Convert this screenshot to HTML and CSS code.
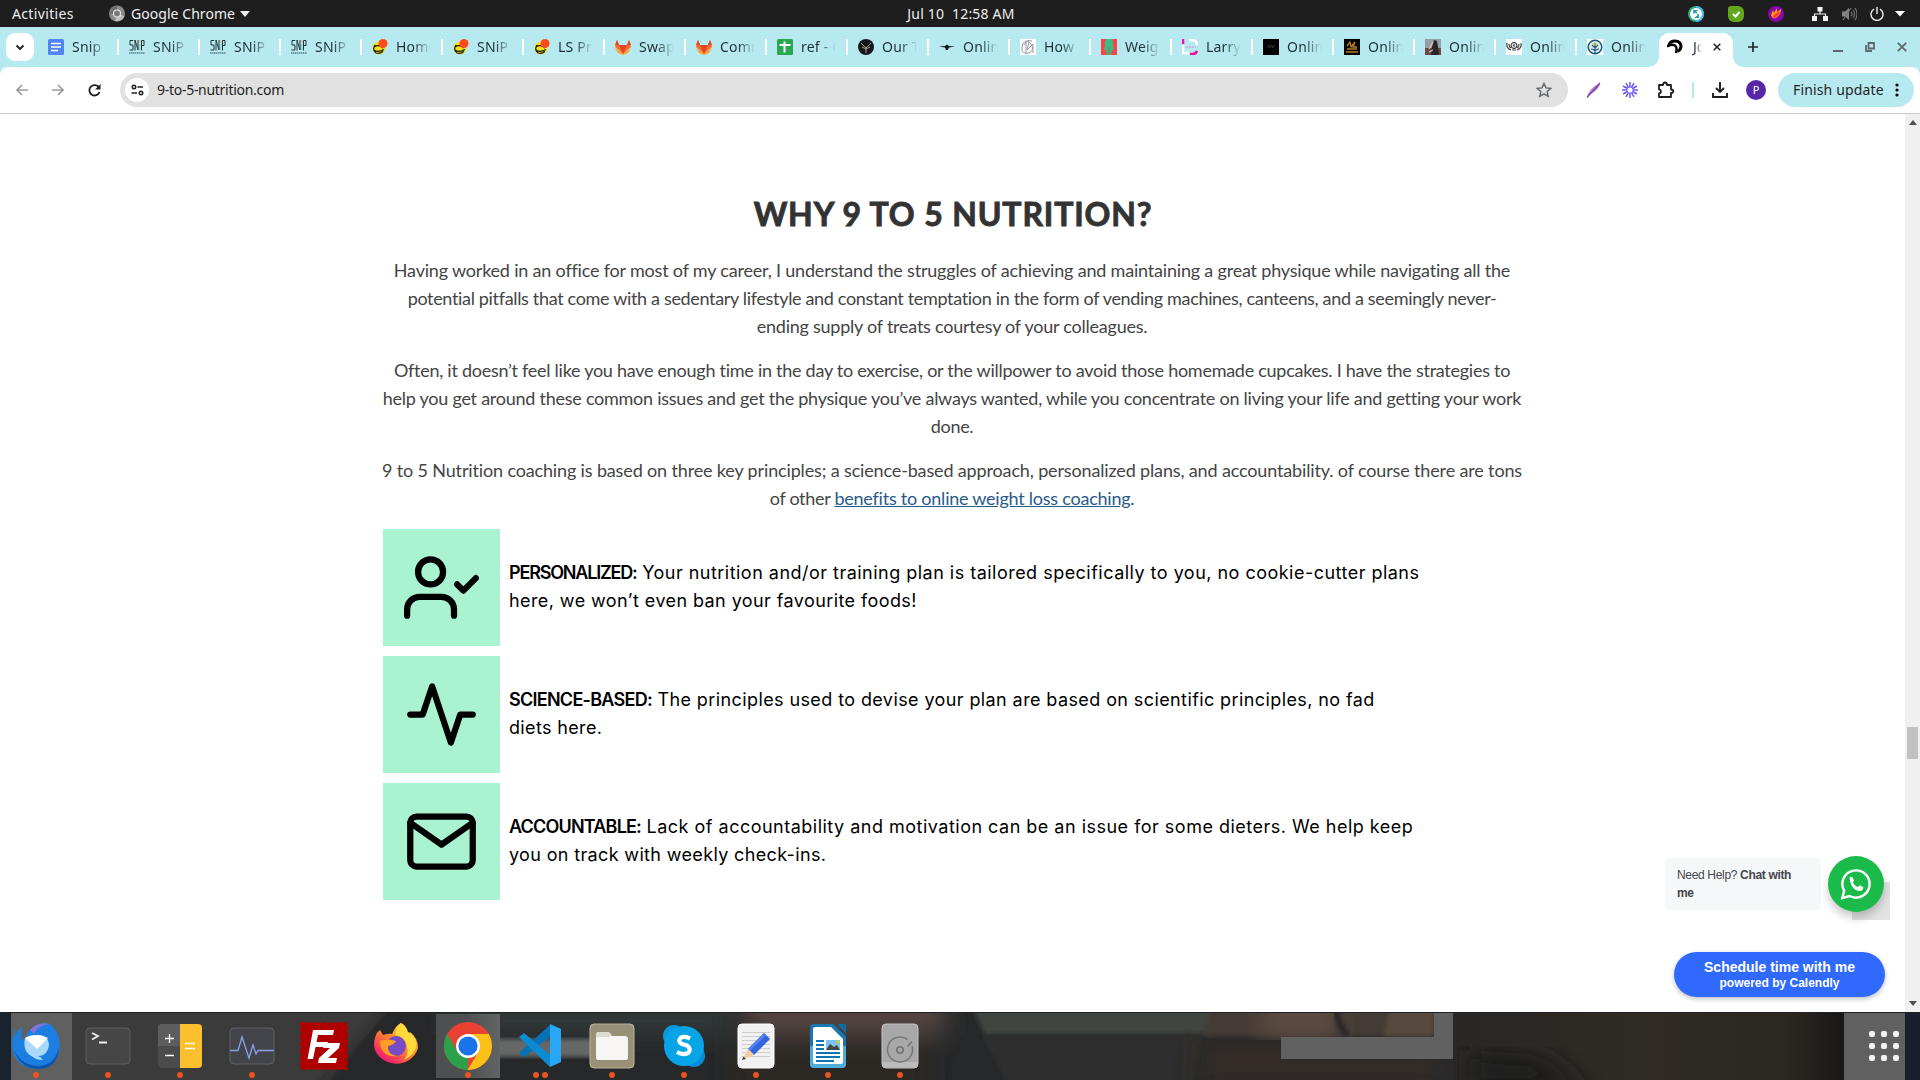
FILE: index.html
```html
<!DOCTYPE html>
<html lang="en">
<head>
<meta charset="utf-8">
<title>9 to 5 Nutrition</title>
<link rel="stylesheet" href="styles.css">
</head>
<body>
<svg width="0" height="0" class="defs">
  <symbol id="doc" viewBox="0 0 16 16"><rect width="16" height="16" rx="1.5" fill="#4f86f3"/><path d="M3 4.5h10M3 8h10M3 11.5h7" stroke="#fff" stroke-width="1.6"/></symbol>
  <symbol id="snp" viewBox="0 0 16 16"><path d="M4.200 1.500H1v4.500h3v5H.5M6 11.500V1l3 10V1M12.500 11.500V1.500h2.500v5h-2.500" fill="none" stroke="#1e3438" stroke-width="1"/><path d="M10.800 1v3" stroke="#f5b083" stroke-width="1"/><path d="M10.800 5v6" stroke="#6fd8b4" stroke-width="1"/><path d="M0 14h16" stroke="#5d8087" stroke-width="1.600" stroke-dasharray="1.500 .5"/></symbol>
  <symbol id="hat" viewBox="0 0 16 16"><circle cx="7" cy="9" r="6.500" fill="#f4e11b"/><path d="M2 8q5-3 9 1M2 11q4 3 10-.5M4 14q4 1 7-1.500M3 6Q0 11 4 14" fill="none" stroke="#1c1c12" stroke-width="1.200"/><circle cx="11" cy="4.500" r="4.500" fill="#ff4a1a"/></symbol>
  <symbol id="fox" viewBox="0 0 16 16"><path d="M2 1l2 5h8l2-5 2 7-8 7-8-7z" fill="#fc6d26"/><path d="M4 6h8l-4 9zM2 1l2 5H0z M14 1l2 5h-4z" fill="#e24329"/><path d="M0 9l8 6 8-6-3 5-5 2-5-2z" fill="#fca326"/></symbol>
  <symbol id="sheet" viewBox="0 0 16 16"><rect width="16" height="16" rx="1.500" fill="#28a851"/><path d="M2.500 6h11M7.500 2.500v11" stroke="#fff" stroke-width="2"/></symbol>
  <symbol id="our" viewBox="0 0 16 16"><circle cx="8" cy="8" r="8" fill="#15181a"/><path d="M3 4l5 5 5-5M4 8l4 2 4-2M8 9v5" fill="none" stroke="#a59b80" stroke-width="1"/></symbol>
  <symbol id="bird" viewBox="0 0 16 16"><path d="M0 7.500l6-.6 2-1.500 2 1.500 6 .6-6 1-1.200 2.500H7L6 8.500z" fill="#101a1c"/></symbol>
  <symbol id="sketch" viewBox="0 0 16 16"><rect width="16" height="16" fill="#fff"/><path d="M12 2Q3 0 2 8t7 6q6-3 2-9T4 6M6 14V3M9 3l-2 8 6-6v9" fill="none" stroke="#9b9b9b"/></symbol>
  <symbol id="body" viewBox="0 0 16 16"><rect width="16" height="16" fill="#fb4248"/><path d="M5 0h6q2 3 1 7l1 4h-2l-1 5H6l-1-5H3l1-4Q3 3 5 0z" fill="#35bf83"/><path d="M8 8v8" stroke="#a4694e"/></symbol>
  <symbol id="larry" viewBox="0 0 16 16"><path d="M1 6v8h6M7 1h4q4 1 4 5" fill="none" stroke="#fff" stroke-width="2.500"/><path d="M1 0v5M8 15h3q3 0 4-3" fill="none" stroke="#f10ca7" stroke-width="2.500"/><path d="M4 8h10" stroke="#cfa3dd" stroke-width="1.600" stroke-dasharray="2 1"/></symbol>
  <symbol id="black" viewBox="0 0 16 16"><rect width="16" height="16"/><path d="M4 9l2-3 1 3 2-3 1 3 2-3" fill="none" stroke="#333"/></symbol>
  <symbol id="gold" viewBox="0 0 16 16"><rect width="16" height="16"/><path d="M3 7l3-4 1 5 4-5-2 5h4M3 10h10M2 13h12" fill="none" stroke="#b17c22" stroke-width="1.300"/></symbol>
  <symbol id="photo" viewBox="0 0 16 16"><rect width="16" height="16" fill="#969fa5"/><rect y="9" width="16" height="7" fill="#664c45"/><path d="M9 1l3 1 1 6 1 8H6l1-8z" fill="#29262a"/><path d="M8 3l-4 7M4 13l4-2" stroke="#e6c2b0" stroke-width="1.200"/></symbol>
  <symbol id="crest" viewBox="0 0 16 16"><rect width="16" height="16" fill="#fff"/><path d="M1 4q-1 5 4 7M15 4q1 5-4 7M3 5q0 3 2 4M13 5q0 3-2 4" fill="none" stroke="#444" stroke-width="1.200"/><circle cx="8" cy="6.500" r="3" fill="#ddd" stroke="#222"/><circle cx="8" cy="6.500" r="1" fill="#444"/><path d="M6 11h4" stroke="#444"/></symbol>
  <symbol id="tree" viewBox="0 0 16 16"><rect width="16" height="16" fill="#fff"/><circle cx="8" cy="8" r="6.800" fill="#dcebe8" stroke="#1c5978" stroke-width="1.500"/><path d="M8 15V6M4 10q3 0 4 2 1-2 4-2M5 6l3 3 3-3" fill="none" stroke="#1c5978" stroke-width="1.100"/><circle cx="8" cy="5" r="1.600" fill="#94b945"/></symbol>
</svg>

<header class="topbar">
  <div class="top-left"><span class="activities">Activities</span>
    <svg width="16" height="17" viewBox="0 0 16 17"><circle cx="8" cy="8.500" r="8" fill="#8a8a8a"/><path d="M8 8.500L15.500 11A8 8 0 0 1 6 16z" fill="#bdbdbd"/><path d="M8 8.500H1A8 8 0 0 1 8 .5z" fill="#6d6d6d"/><circle cx="8" cy="8.500" r="3.500" fill="#777" stroke="#e6e6e6" stroke-width="1.200"/></svg>
    <span class="app">Google Chrome</span><svg width="10" height="6"><path d="M0 0h10L5 6z" fill="#eee"/></svg></div>
  <div class="clock">Jul 10&nbsp; 12:58 AM</div>
  <div class="tray">
    <svg width="16" height="16"><circle cx="8" cy="8" r="8" fill="#2fa97c"/><path d="M8 0a8 8 0 0 1 0 16z" fill="#4ab5ec"/><circle cx="8" cy="8" r="6" fill="#fff"/><path d="M5 4h5L6 8zM6 12l5-4v4z" fill="#239dae"/><path d="M5 7l3-1 3 4" fill="none" stroke="#239dae"/></svg>
    <svg width="16" height="16"><rect width="16" height="16" rx="6" fill="#62a61b"/><rect width="9" height="9" rx="3" fill="#62a61b"/><path d="M5 8l2.500 2.500L11.500 6" fill="none" stroke="#fff" stroke-width="2"/></svg>
    <svg width="16" height="16"><circle cx="8" cy="8" r="8" fill="#8408a5"/><path d="M3 9l2-5 1 3 3-5v4l4-3q0 6-5 9-4 1-5-3z" fill="#ff9c12"/><path d="M4 11l3-3 5-3q-1 5-5 7z" fill="#ff3c2d"/></svg>
    <svg class="net" width="16" height="14"><path d="M5.500 0h5v4.500h-5zM0 9h5v5H0zM11 9h5v5h-5z" fill="#f2f2f2"/><path d="M8 4v3M2.500 10V7h11v3" fill="none" stroke="#f2f2f2" stroke-width="1.200"/></svg>
    <svg class="vol" width="15" height="14"><path d="M0 4.500h3L7 1v12L3 9.500H0z" fill="#858585"/><path d="M9 5q2 2 0 4M11 3q3 4 0 8M13 1q4 6 0 12M1 13L9 1" fill="none" stroke="#767676" stroke-width="1.100"/></svg>
    <svg class="pow" width="14" height="14"><path d="M4 2.200a6 6 0 1 0 6 0M7 0v7" fill="none" stroke="#eee" stroke-width="1.400"/></svg>
    <svg class="car" width="10" height="6"><path d="M0 0h10L5 5.500z" fill="#fff"/></svg>
  </div>
</header>

<nav class="tabs">
  <div class="search-tabs"><svg width="10" height="7"><path d="M1.500 1.500L5 5l3.500-3.500" fill="none" stroke="#1f2325" stroke-width="1.900"/></svg></div>
  <div class="tab"><svg><use href="#doc"/></svg><span>Snip l</span></div>
  <div class="tab"><svg><use href="#snp"/></svg><span>SNiP</span></div>
  <div class="tab"><svg><use href="#snp"/></svg><span>SNiP</span></div>
  <div class="tab"><svg><use href="#snp"/></svg><span>SNiP</span></div>
  <div class="tab"><svg><use href="#hat"/></svg><span>Home</span></div>
  <div class="tab"><svg><use href="#hat"/></svg><span>SNiP</span></div>
  <div class="tab"><svg><use href="#hat"/></svg><span>LS Pr</span></div>
  <div class="tab"><svg><use href="#fox"/></svg><span>Swap</span></div>
  <div class="tab"><svg><use href="#fox"/></svg><span>Comm</span></div>
  <div class="tab"><svg><use href="#sheet"/></svg><span>ref - G</span></div>
  <div class="tab"><svg><use href="#our"/></svg><span>Our T</span></div>
  <div class="tab"><svg><use href="#bird"/></svg><span>Onlin</span></div>
  <div class="tab"><svg><use href="#sketch"/></svg><span>How</span></div>
  <div class="tab"><svg><use href="#body"/></svg><span>Weig</span></div>
  <div class="tab"><svg><use href="#larry"/></svg><span>Larry</span></div>
  <div class="tab"><svg><use href="#black"/></svg><span>Onlin</span></div>
  <div class="tab"><svg><use href="#gold"/></svg><span>Onlin</span></div>
  <div class="tab"><svg><use href="#photo"/></svg><span>Onlin</span></div>
  <div class="tab"><svg><use href="#crest"/></svg><span>Onlin</span></div>
  <div class="tab last"><svg><use href="#tree"/></svg><span>Onlin</span></div>
  <div class="tab-active">
    <svg width="16" height="16" viewBox="0 0 16 16"><path d="M2 6Q3 2 8 2q6 0 6 6-.5 3-3.500 4.500" fill="none" stroke="#000" stroke-width="3"/><path d="M0 7.500q4-3 8-1Q10.500 8 9 14" fill="none" stroke="#000" stroke-width="2.400"/></svg>
    <span>Jo</span>
    <svg width="8" height="8"><path d="M.7.7l6.600 6.600M7.300.7L.7 7.300" stroke="#222" stroke-width="1.500"/></svg>
  </div>
  <svg class="plus" width="10" height="10"><path d="M5 0v10M0 5h10" stroke="#1f2a2d" stroke-width="1.700"/></svg>
  <div class="win">
    <svg width="10" height="10"><path d="M0 9h10" stroke="#5b6a6e" stroke-width="2"/></svg>
    <svg width="10" height="10"><path d="M3.500 1H9v5.500H3.500zM1 3v6h6" fill="none" stroke="#5b6a6e" stroke-width="1.800"/></svg>
    <svg width="10" height="10"><path d="M.8.8l8.400 8.400M9.200.8L.8 9.200" stroke="#5b6a6e" stroke-width="1.800"/></svg>
  </div>
</nav>

<div class="toolbar">
  <div class="nav">
    <svg width="12" height="12"><path d="M12 6H1.500M6 1L1 6l5 5" fill="none" stroke="#9a9a9a" stroke-width="1.600"/></svg>
    <svg width="12" height="12"><path d="M0 6h10.500M6 1l5 5-5 5" fill="none" stroke="#9a9a9a" stroke-width="1.600"/></svg>
    <svg width="13" height="13"><path d="M11 3.500A5.200 5.200 0 1 0 11.500 8" fill="none" stroke="#1f1f1f" stroke-width="1.800"/><path d="M12.500 0v5.500H7z" fill="#1f1f1f"/></svg>
  </div>
  <div class="omnibox">
    <div class="site"><svg width="13" height="12"><g fill="none" stroke="#222" stroke-width="1.600"><circle cx="3" cy="3" r="1.700"/><path d="M6.500 3H12M.5 9H6"/><circle cx="10" cy="9" r="1.700"/></g></svg></div>
    <span>9-to-5-nutrition.com</span>
    <svg class="star" width="16" height="16" viewBox="0 0 16 16"><path d="M8 1.500l2 4.400 4.800.5-3.600 3.200 1 4.700L8 11.900l-4.200 2.400 1-4.700L1.200 6.400 6 5.900z" fill="none" stroke="#606367" stroke-width="1.400"/></svg>
  </div>
  <div class="tools">
    <svg width="16" height="16"><path d="M1 15Q3 6 14 1q0 7-10 11z" fill="#b98ad8"/><path d="M1 15.500L14 1" stroke="#7f3a94" stroke-width="1.200"/></svg>
    <svg width="16" height="16" viewBox="-8 -8 16 16"><g stroke="#6a55f4" stroke-width="1.500"><path d="M0-8v16M-6.900-4L6.900 4M-6.900 4L6.900-4M-4-6.900L4 6.900M4-6.900L-4 6.900M-8 0H8"/></g><circle r="2.600" fill="#fff"/></svg>
    <svg width="18" height="18"><path d="M2 4h4q0-2.500 2-2.500T10 4h4v4.500q2.300 0 2.300 1.800T14 12v4H2v-3.500q2-.3 2-2T2 8.300z" fill="none" stroke="#1f1f1f" stroke-width="1.800" stroke-linejoin="round"/></svg>
    <i></i>
    <svg width="16" height="16"><path d="M8 0v9.500M4 6l4 4 4-4M1 11v4h14v-4" fill="none" stroke="#1f1f1f" stroke-width="1.900"/></svg>
    <b class="avatar">P</b>
  </div>
  <div class="update"><span>Finish update</span><svg width="4" height="14"><circle cx="2" cy="2" r="1.600"/><circle cx="2" cy="7" r="1.600"/><circle cx="2" cy="12" r="1.600"/></svg></div>
</div>

<div class="view">
  <main>
    <h1>WHY 9 TO 5 NUTRITION?</h1>
    <p><span class="a1">Having worked in an office for most of my career, I understand the struggles of achieving and maintaining a great physique while navigating all the</span>
    <span class="a2">potential pitfalls that come with a sedentary lifestyle and constant temptation in the form of vending machines, canteens, and a seemingly never-</span>
    <span class="a3">ending supply of treats courtesy of your colleagues.</span></p>
    <p><span class="b1">Often, it doesn’t feel like you have enough time in the day to exercise, or the willpower to avoid those homemade cupcakes. I have the strategies to</span>
    <span class="b2">help you get around these common issues and get the physique you’ve always wanted, while you concentrate on living your life and getting your work</span>
    <span class="b3">done.</span></p>
    <p><span class="c1">9 to 5 Nutrition coaching is based on three key principles; a science-based approach, personalized plans, and accountability. of course there are tons</span>
    <span class="c2">of other <a>benefits to online weight loss coaching</a>.</span></p>
    <section class="features">
      <div class="feature"><div class="tile"><svg viewBox="0 0 24 24"><path d="M16 21v-2a4 4 0 0 0-4-4H5a4 4 0 0 0-4 4v2"/><circle cx="8.500" cy="7" r="4"/><path d="M17 11l2 2 4-4"/></svg></div>
        <div class="desc"><span class="d1"><strong>PERSONALIZED:</strong> Your nutrition and/or training plan is tailored specifically to you, no cookie-cutter plans</span><span class="d2">here, we won’t even ban your favourite foods!</span></div></div>
      <div class="feature"><div class="tile"><svg viewBox="0 0 24 24"><path d="M22 12h-4l-3 9L9 3l-3 9H2"/></svg></div>
        <div class="desc"><span class="e1"><strong>SCIENCE-BASED:</strong> The principles used to devise your plan are based on scientific principles, no fad</span><span class="e2">diets here.</span></div></div>
      <div class="feature"><div class="tile"><svg viewBox="0 0 24 24"><path d="M4 4h16c1.100 0 2 .9 2 2v12c0 1.100-.9 2-2 2H4c-1.100 0-2-.9-2-2V6c0-1.100.9-2 2-2z"/><path d="M22 6l-10 7L2 6"/></svg></div>
        <div class="desc"><span class="f1"><strong>ACCOUNTABLE:</strong> Lack of accountability and motivation can be an issue for some dieters. We help keep</span><span class="f2">you on track with weekly check-ins.</span></div></div>
    </section>
  </main>
  <div class="scroll"><svg width="8" height="5"><path d="M0 5h8L4 0z" fill="#505050"/></svg><div class="thumb"></div><svg width="8" height="5"><path d="M0 0h8L4 5z" fill="#505050"/></svg></div>
  <div class="totop"></div>
  <div class="help">Need Help? <b>Chat with<br>me</b></div>
  <div class="whats"><svg width="32" height="32" viewBox="0 0 32 32"><path d="M2.300 30l1.900-7.200A13.600 13.600 0 1 1 9.600 28z" fill="none" stroke="#fff" stroke-width="2.400"/><path d="M9.500 10q1-2 2.800-1l1.700 3.500-1.200 2q1.500 3.300 5 4.800l1.700-2 3.700 1.800q.5 3-3 4Q11.500 23 9.500 10z" fill="#fff"/></svg></div>
  <div class="calendly"><span>Schedule time with me</span><small>powered by Calendly</small></div>
</div>

<footer class="dock">
  <svg class="wall" width="1920" height="68">
    <defs><filter id="bl"><feGaussianBlur stdDeviation="12"/></filter><filter id="b2"><feGaussianBlur stdDeviation="2"/></filter>
    <linearGradient id="br" x2="1"><stop offset="0" stop-color="#282725"/><stop offset=".5" stop-color="#302b25"/><stop offset=".85" stop-color="#2b2722"/><stop offset="1" stop-color="#191817"/></linearGradient></defs>
    <rect width="1920" height="68" fill="#262829"/>
    <path d="M0-5h390l-75 78H0z" fill="#3b3b3b" filter="url(#b2)"/>
    <path d="M384-5l-63 78" stroke="#343535" stroke-width="8" filter="url(#b2)"/>
    <g filter="url(#bl)"><path d="M450-20h280v42H450z" fill="#333738"/><path d="M745-20h200v44H745z" fill="#554540"/><path d="M730 34h200v50H730z" fill="#2b2624"/></g>
    <path d="M972-5h242v28H985z" fill="#41443f" filter="url(#b2)"/><path d="M982 23h220l-10 50H1008z" fill="#2e2f2d" filter="url(#b2)"/>
    <path d="M1200 24h240v54h-243z" fill="#302b28" filter="url(#bl)"/><path d="M1212-5h222v29h-230z" fill="#443b36" filter="url(#b2)"/>
    <path d="M1265-10h68l12 34h-88z" fill="#5f4e42" filter="url(#bl)"/><path d="M1336-5q2 21 12 29" stroke="#29282a" stroke-width="7" fill="none" filter="url(#b2)"/><path d="M1390-5h44v29h-50z" fill="#57493e" filter="url(#b2)"/>
    <rect x="1453" width="392" height="68" fill="url(#br)"/><path d="M1470 78V38l70 5 50 35z" fill="#1d1c1b" filter="url(#bl)"/>
    <path d="M1434 0h19v47h-172V25h153z" fill="#616161"/>
    <path d="M480 27h115v18H480z" fill="#666767" filter="url(#b2)"/>
    <rect width="11" height="68" fill="#19232d"/><rect x="11" width="61" height="68" fill="#606060"/>
    <rect x="1844" width="61" height="68" fill="#606060"/><rect x="1905" width="15" height="68" fill="#182030"/>
    <rect width="1920" height="1" fill="#202124"/>
  </svg>
  <div class="apps">
    <div class="item"><svg viewBox="0 0 48 48"><path d="M4 5Q0 14 0 24a23.500 22.500 0 0 0 48 0q0-14-10-22Q26-1 18 8q-4 2-3 5l-5 6Q9 9 10 5 5 8 2 17z" fill="#1b7ee0"/><path d="M2 28q8 16 25 16 15-1 20-18-1 21-22 21Q8 46 2 28z" fill="#0c56ae"/><path d="M18 8q8-9 20-6-12 1-16 10z" fill="#8276d7"/><path d="M13 16q-3 14 8 19 3 3 10 3-2-3-5-4 10 0 11-12-1-9-12-9-8 0-12 3z" fill="#a9d8fa"/><path d="M13 16l12 11 11-11q-11-6-23 0z" fill="#fff"/></svg><i></i></div>
    <div class="item"><svg viewBox="0 0 48 48"><rect x="2" y="6" width="44" height="36" rx="4" fill="#464646" stroke="#5f5f5f"/><path d="M8 11l6 3-6 3.500M15 20.500h8" fill="none" stroke="#eee" stroke-width="1.800"/></svg><i></i></div>
    <div class="item"><svg viewBox="0 0 48 48"><rect x="2" y="2" width="44" height="44" rx="4" fill="#4b4b4b"/><path d="M24 2H6q-4 0-4 4v18h22z" fill="#5d5d5d"/><path d="M24 2h18q4 0 4 4v36q0 4-4 4H24z" fill="#fcbf2d"/><path d="M9 16.500h9M13.500 12v9M9 33.500h9M29 21.500h10M29 26.500h10" stroke="#fff" stroke-width="1.300"/></svg><i></i></div>
    <div class="item"><svg viewBox="0 0 48 48"><rect x="2" y="6" width="44" height="36" rx="4" fill="#434449" stroke="#606164"/><path d="M2 28.500h8L14 15l7 21 4-13 3 9 2-3.500h16" fill="none" stroke="#86a2e8" stroke-width="1.300"/></svg><i></i></div>
    <div class="item off"><svg viewBox="0 0 48 48"><rect x="1" y="1" width="46" height="46" fill="#ae0000" stroke="#ae0000" stroke-width="2" stroke-dasharray="4 3"/><path d="M7.500 37L13 8h21l-1 5H18l-1.500 7H28l-1 5H15.500l-2.500 12zM24 21h16l-1 5-11 10h9l-1 5H18l1-5 11-10h-7z" fill="#fff"/></svg></div>
    <div class="item off"><svg viewBox="0 0 48 48"><defs><linearGradient id="ff" x1="1" x2=".2" y2="1"><stop offset=".1" stop-color="#ffe84b"/><stop offset=".5" stop-color="#ff8a2a"/><stop offset=".9" stop-color="#f3246c"/></linearGradient></defs><path d="M2 24Q2 12 8 8l3 5q6-2 9-1 4-9 9-11l6 12 3-3q8 6 8 16a22.500 21 0 0 1-44-2z" fill="url(#ff)"/><path d="M29 1q-5 4-6 12 10 1 12 11 2 8-3 14 11-5 12-14 0-10-8-14-2-7-7-9z" fill="#ffda3b"/><circle cx="24" cy="24" r="10" fill="#774bc3"/><path d="M8 19q8-3 16 0-2 4-8 5-1 8 9 10Q9 36 8 19z" fill="#ff9d24"/></svg></div>
    <div class="item current"><svg viewBox="0 0 48 48"><circle cx="24" cy="24" r="24" fill="#e94235"/><path d="M3.200 12L13.600 30 24 36l-.5 12A24 24 0 0 1 3.200 12z" fill="#2ca14c"/><path d="M24 12h20.800A24 24 0 0 1 23.500 48L34.400 30z" fill="#fcc016"/><circle cx="24" cy="24" r="12" fill="#fff"/><circle cx="24" cy="24" r="9.600" fill="#1a73e8"/></svg><i></i></div>
    <div class="item"><svg viewBox="0 0 48 48"><path d="M34 3L3 31l5 4L34 15z" fill="#0872b9"/><path d="M3 15l5-4 26 22v12z" fill="#0c8bd5"/><path d="M34 2l11 5v33l-11 5z" fill="#29a6f5"/></svg><i></i><i></i></div>
    <div class="item"><svg viewBox="0 0 48 48"><rect x="2" y="2" width="44" height="44" rx="4" fill="#999078" stroke="#b9b29d"/><path d="M8 13q0-3 3-3h8l4 4h14q3 0 3 3v19q0 2-2 2H10q-2 0-2-2z" fill="#f7f6f4"/><path d="M8 15h13l3-2-3-3H11q-3 0-3 5z" fill="#dedbd2"/></svg><i></i></div>
    <div class="item"><svg viewBox="0 0 48 48"><circle cx="14" cy="14" r="11" fill="#0999df"/><circle cx="34" cy="34" r="11" fill="#078bd8"/><circle cx="24" cy="24" r="20" fill="#07a4e8"/><path d="M30 16.500q-5-2.500-9-1-4 4 1 6.500l5 1.500q5 3.500 1 7.500-5 2.500-11-1" fill="none" stroke="#fff" stroke-width="4.200"/></svg><i></i></div>
    <div class="item"><svg viewBox="0 0 48 48"><rect x="6" y="2" width="36" height="44" rx="4" fill="#f1f1f2" stroke="#fff"/><path d="M10 10.500h28M10 14.500h28M10 18.500h28M10 22.500h28M10 26.500h28M10 30.500h28M10 34.500h28" stroke="#ccc"/><path d="M16 27L32 11l6 6-16 16z" fill="#3664dc"/><path d="M32 11l2 2-16 16-2-2z" fill="#4f83f3"/><path d="M16 27l6 6-12 5z" fill="#f5cda5"/><path d="M10 38l1.500-3.500L14 37z" fill="#444"/></svg><i></i></div>
    <div class="item"><svg viewBox="0 0 48 48"><path d="M10 2h19l13 12v28q0 4-4 4H10q-4 0-4-4V6q0-4 4-4z" fill="#1877ae"/><path d="M6 24h36v18q0 4-4 4H10q-4 0-4-4z" fill="#4facd9"/><path d="M33 2h9v10z" fill="#116b9e"/><path d="M11 5h16l12 12v23q0 2-2 2H11q-2 0-2-2V7q0-2 2-2z" fill="#fff"/><path d="M12 19h8M12 23h8M12 27h8M12 31h24M12 35h24M12 39h18" stroke="#0d75af" stroke-width="2"/><rect x="22" y="18" width="14" height="10" fill="#7cc4ed"/><path d="M22 28l4-6 4 3 3-2 3 5z" fill="#444"/><circle cx="34" cy="20" r="1.500" fill="#fc0"/></svg><i></i></div>
    <div class="item"><svg viewBox="0 0 48 48"><rect x="6" y="2" width="36" height="44" rx="4" fill="#a8a8a8" stroke="#c2c2c2"/><path d="M7 40h34v3q0 2-2 2H9q-2 0-2-2z" fill="#bcbcbc"/><path d="M31.500 17.500A12.500 12.500 0 1 0 36 24M31.500 24.500l4.500-5" fill="none" stroke="#777" stroke-width="1.600"/><circle cx="24" cy="28" r="3.200" fill="none" stroke="#777" stroke-width="1.800"/></svg><i></i></div>
  </div>
  <div class="grid"><i></i><i></i><i></i><i></i><i></i><i></i><i></i><i></i><i></i></div>
</footer>
</body>
</html>
```
FILE: styles.css
```css
* { box-sizing: border-box; }
body { margin: 0; width: 1920px; height: 1080px; overflow: hidden; display: flex; flex-direction: column; background: #fff; font-family: "Noto Sans", sans-serif; font-size: 14px; }
svg { display: block; flex: none; }
.defs { position: absolute; }

.topbar { height: 27px; flex: none; background: #1e1e1e; color: #eee; display: grid; grid-template-columns: 1fr auto 1fr; align-items: center; line-height: 26px; }
.top-left { display: flex; align-items: center; padding-left: 12px; }
.activities { width: 97px; letter-spacing: .35px; }
.app { margin: 0 5px 0 6px; letter-spacing: .05px; }
.clock { letter-spacing: .2px; white-space: pre; padding-left: 2px; }
.tray { display: flex; align-items: center; justify-content: flex-end; padding-right: 15px; gap: 24px; height: 26px; }
.tray .net { margin-left: 4px; }
.tray .vol { margin-left: -10px; }
.tray .pow { margin-left: -11px; }
.tray .car { margin-left: -13px; }

.tabs { height: 40px; flex: none; position: relative; z-index: 1; background: #b7e9f1; display: flex; align-items: center; padding-left: 6px; color: #1f3035; }
.search-tabs { width: 28px; height: 28px; border-radius: 9px; background: #fff; display: grid; place-items: center; margin-right: 4px; }
.tab { width: 81px; height: 16px; flex: none; display: flex; align-items: center; gap: 8px; padding-left: 10px; border-right: 2px solid #fff; }
.tab.last { border-color: transparent; }
.tab svg { width: 16px; height: 16px; }
.tab span { width: 35px; overflow: hidden; white-space: nowrap; line-height: 20px; letter-spacing: .2px; -webkit-mask-image: linear-gradient(90deg, #000 50%, transparent); mask-image: linear-gradient(90deg, #000 50%, transparent); }
.tab-active { width: 74px; height: 34px; align-self: flex-end; margin-left: 1px; border-radius: 10px 10px 0 0; background: #fff; display: flex; align-items: center; padding: 0 12px 6px 8px; gap: 8px; position: relative; }
.tab-active::before, .tab-active::after { content: ""; position: absolute; bottom: 0; width: 10px; height: 10px; }
.tab-active::before { left: -10px; background: radial-gradient(circle at 0 0, transparent 9.5px, #fff 10px); }
.tab-active::after { right: -10px; background: radial-gradient(circle at 100% 0, transparent 9.5px, #fff 10px); }
.tab-active span { width: 11px; margin-right: 3px; padding-left: 2px; line-height: 20px; overflow: hidden; -webkit-mask-image: linear-gradient(90deg, #000 40%, transparent); mask-image: linear-gradient(90deg, #000 40%, transparent); }
.plus { margin-left: 15px; }
.win { margin-left: auto; display: flex; gap: 22px; padding-right: 13px; }

.toolbar { height: 47px; flex: none; border-bottom: 1px solid #c9cacb; display: flex; align-items: center; background: #fff; border-radius: 8px 8px 0 0; color: #1f1f1f; box-shadow: 0 -10px 0 #b7e9f1; }
.nav { width: 120px; display: flex; gap: 24px; padding-left: 16px; }
.omnibox { width: 1448px; height: 34px; border-radius: 17px; background: #e1e1e1; display: flex; align-items: center; padding: 0 16px 0 5px; }
.omnibox span { margin: 0 0 2px 8px; letter-spacing: -.28px; }
.site { width: 24px; height: 24px; border-radius: 50%; background: #fff; display: grid; place-items: center; }
.star { margin-left: auto; }
.tools { display: flex; align-items: center; padding-left: 18px; gap: 20px; }
.tools svg:nth-child(3) { margin: 0 -1px; }
.tools i { width: 2px; height: 16px; background: #b7e9f1; margin: 0 -2px 0 -2px; }
.avatar { width: 20px; height: 20px; border-radius: 50%; background: #5727a8; color: #fff; font-size: 11px; font-weight: 400; line-height: 20px; text-align: center; margin-left: -2px; }
.update { margin-left: auto; margin-right: 6px; width: 136px; height: 34px; border-radius: 17px; background: #b7e9f1; display: flex; align-items: center; justify-content: space-between; padding: 0 15px; }
.update span { letter-spacing: .15px; margin-bottom: 1px; }

.view { height: 898px; flex: none; position: relative; display: flex; justify-content: space-between; background: #fff; }
main { width: 1140px; margin-left: 383px; padding-top: 80px; color: #444; font: 18px/28px Lato, sans-serif; text-align: center; }
h1 { margin: 0 0 22px; font: 700 32px/40px Lato, sans-serif; letter-spacing: .85px; color: #333; -webkit-text-stroke: .9px #333; }
p { margin: 0 0 16px; }
p span { display: block; white-space: nowrap; margin: 0 -19px 0 -21px; }
a { color: #2a5a8a; text-decoration: underline; letter-spacing: -.236px; }
.a1 { letter-spacing: -.194px; } .a2 { letter-spacing: -.33px; } .a3 { letter-spacing: -.24px; }
.b1 { letter-spacing: -.265px; } .b2 { letter-spacing: -.252px; } .b3 { letter-spacing: -.3px; }
.c1 { letter-spacing: -.147px; } .c2 { letter-spacing: -.3px; }
.features { display: flex; flex-direction: column; gap: 10px; margin-top: 17px; color: #000; font: 18px/28px Inter, sans-serif; text-align: left; }
.feature { display: flex; gap: 9px; }
.tile { width: 117px; height: 117px; background: #a9f3d1; display: grid; place-items: center; }
.tile svg { width: 75px; height: 75px; fill: none; stroke: #000; stroke-width: 2; stroke-linecap: round; stroke-linejoin: round; }
.desc { padding-top: 30px; white-space: nowrap; }
.desc span { display: block; }
strong { font-weight: 600; }
.d1 { letter-spacing: .48px; } .d1 strong { letter-spacing: -1.19px; } .d2 { letter-spacing: .41px; }
.e1 { letter-spacing: .4px; } .e1 strong { letter-spacing: -.73px; } .e2 { letter-spacing: .35px; }
.f1 { letter-spacing: .49px; } .f1 strong { letter-spacing: -.81px; } .f2 { letter-spacing: .35px; }

.scroll { width: 15px; background: #f0f0f0; display: flex; flex-direction: column; align-items: center; padding: 6px 0; }
.thumb { width: 11px; height: 32px; background: #c1c1c1; margin: 602px 0 auto; }
.totop { position: absolute; left: 1852px; top: 768px; width: 38px; height: 38px; background: #e2e2e2; }
.help { position: absolute; left: 1665px; top: 744px; width: 156px; height: 52px; border-radius: 4px; background: #f5f7f9; color: #43474e; padding: 8px 10px 0 12px; font: 12px/18px "Liberation Sans", sans-serif; letter-spacing: -.33px; }
.whats { position: absolute; left: 1828px; top: 742px; width: 56px; height: 56px; border-radius: 50%; background: #1aba4b; box-shadow: 0 6px 8px rgba(0,0,0,.2); display: grid; place-items: center; }
.calendly { position: absolute; left: 1674px; top: 838px; width: 211px; height: 45px; border-radius: 23px; background: #3069fe; color: #fff; box-shadow: 0 2px 5px rgba(0,0,0,.25); display: flex; flex-direction: column; align-items: center; padding-top: 7px; font: 700 14px/16px "Liberation Sans", sans-serif; }
.calendly small { font-size: 12px; line-height: 17px; }

.dock { height: 68px; flex: none; position: relative; display: flex; justify-content: space-between; }
.wall { position: absolute; left: 0; top: 0; }
.apps { position: relative; display: flex; }
.item { width: 72px; height: 68px; padding-top: 10px; display: flex; flex-wrap: wrap; justify-content: center; align-content: flex-start; column-gap: 3px; }
.item svg { width: 48px; height: 48px; margin: 0 12px 2px; }
.item i { width: 6px; height: 6px; border-radius: 50%; background: #e95420; }
.current { background: linear-gradient(90deg, #4d4f50 45%, #636464) 50% 2px / 64px 64px no-repeat; }
.grid { position: relative; width: 30px; height: 30px; margin: 19px 21px 0 0; display: grid; grid-template-columns: repeat(3, 6px); gap: 6px; }
.grid i { width: 6px; height: 6px; border-radius: 2px; background: #f3f3f3; }
```
